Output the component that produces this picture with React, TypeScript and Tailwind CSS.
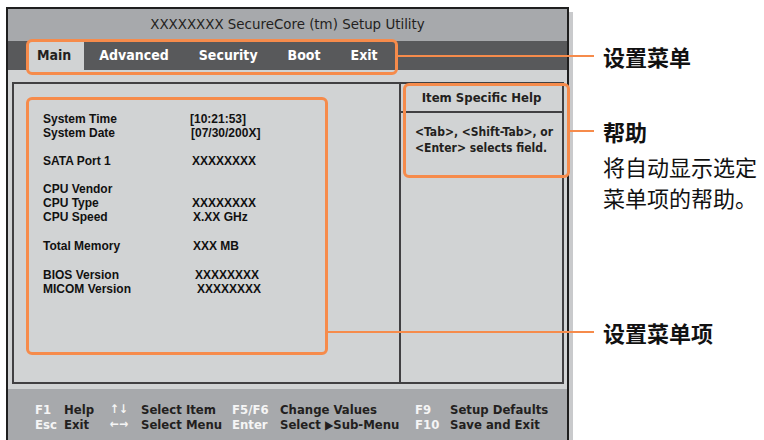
import React from "react";

const bios = "font-['Liberation_Sans_Narrow','DejaVu_Sans_Condensed',sans-serif]";

const items: { label: string; value: string; off: number }[][] = [
  [
    { label: "System Time", value: "[10:21:53]", off: 0 },
    { label: "System Date", value: "[07/30/200X]", off: 1 },
  ],
  [{ label: "SATA Port 1", value: "XXXXXXXX", off: 2 }],
  [
    { label: "CPU Vendor", value: "", off: 0 },
    { label: "CPU Type", value: "XXXXXXXX", off: 2 },
    { label: "CPU Speed", value: "X.XX GHz", off: 3 },
  ],
  [{ label: "Total Memory", value: "XXX MB", off: 3 }],
  [
    { label: "BIOS Version", value: "XXXXXXXX", off: 5 },
    { label: "MICOM Version", value: "XXXXXXXX", off: 7 },
  ],
];

const tabs = ["Advanced", "Security", "Boot", "Exit"];

const App = () => {
  return (
    <div className="relative w-[764px] h-[440px] overflow-hidden bg-white">
      {/* bios window */}
      <div className="ml-[6px] mt-[7px] w-[563px] h-[433px] flex flex-col border-2 border-b-0 border-[#1f1f1f] shadow-[4px_5px_0_#c9cacc] bg-[#d1d3d4]">
        <div className="h-[32px] flex items-center justify-center bg-[#a7a9ac] text-[13.4px] text-[#231f20] font-['DejaVu_Sans',sans-serif]">
          XXXXXXXX SecureCore (tm) Setup Utility
        </div>
        <div className={`h-[30px] flex items-stretch bg-[#58595b] text-[14px] font-bold text-white ${bios}`}>
          <div className="ml-[20px] pl-[9px] pr-[13px] flex items-center bg-[#d1d3d4] text-[#231f20]">Main</div>
          {tabs.map((t) => (
            <div key={t} className="px-[15px] flex items-center">{t}</div>
          ))}
        </div>

        {/* content */}
        <div className="flex-1 flex flex-col">
          <div className="mt-[12px] ml-[4px] mr-[3px] h-[302px] flex border-2 border-[#414042]">
            <div className="w-[387px] pl-[29px] pt-[28px] border-r-2 border-[#414042] font-['Liberation_Sans',Arial,sans-serif] font-bold text-[12px] leading-[14px] text-[#111]">
              {items.map((g, i) => (
                <div key={i} className={i === 2 || i === 3 ? "mb-[15px]" : "mb-[14px]"}>
                  {g.map((r) => (
                    <div key={r.label} className="flex">
                      <span className="w-[147px]">{r.label}</span>
                      <span style={{ paddingLeft: r.off }}>{r.value}</span>
                    </div>
                  ))}
                </div>
              ))}
            </div>
            <div className={`flex-1 flex flex-col text-[#231f20] ${bios}`}>
              <div className="h-[29px] flex items-center justify-center border-b-2 border-[#414042] text-[13px] font-bold">
                Item Specific Help
              </div>
              <div className="pl-[14px] pt-[11px] text-[12px] font-bold leading-[16px]">
                <div>&lt;Tab&gt;, &lt;Shift-Tab&gt;, or</div>
                <div>&lt;Enter&gt; selects field.</div>
              </div>
            </div>
          </div>
          <div className="flex-1" />
        </div>

        {/* footer */}
        <div className={`h-[51px] mt-[5px] bg-[#a7a9ac] pl-[27px] pt-[13px] grid grid-cols-[29px_46px_31px_91px_48px_135px_35px_1fr] grid-rows-[15px_15px] text-[13px] leading-[15px] font-bold text-[#231f20] ${bios}`}>
          <span className="text-[#f5f5f5]">F1</span>
          <span>Help</span>
          <span className="text-[#f5f5f5] text-[12px] leading-[15px]">↑↓</span>
          <span>Select Item</span>
          <span className="text-[#f5f5f5]">F5/F6</span>
          <span>Change Values</span>
          <span className="text-[#f5f5f5]">F9</span>
          <span>Setup Defaults</span>
          <span className="text-[#f5f5f5]">Esc</span>
          <span>Exit</span>
          <span className="text-[#f5f5f5] text-[12px] leading-[15px]">←→</span>
          <span>Select Menu</span>
          <span className="text-[#f5f5f5]">Enter</span>
          <span className="leading-[15px]">Select <span className="text-[12px] leading-[15px]">▶</span>Sub-Menu</span>
          <span className="text-[#f5f5f5]">F10</span>
          <span>Save and Exit</span>
        </div>
      </div>

      {/* callouts */}
      <div className="absolute left-[26px] top-[39px] w-[372px] h-[36px] rounded-[6px] border-[3px] border-[#f68b4b]" />
      <div className="absolute left-[398px] top-[55px] w-[196px] h-[2px] bg-[#f68b4b]" />
      <div className="absolute left-[26px] top-[97px] w-[302px] h-[258px] rounded-[6px] border-[3px] border-[#f68b4b]" />
      <div className="absolute left-[327px] top-[331px] w-[267px] h-[2px] bg-[#f68b4b]" />
      <div className="absolute left-[403px] top-[83px] w-[167px] h-[95px] rounded-[6px] border-[3px] border-[#f68b4b]" />
      <div className="absolute left-[569px] top-[130px] w-[25px] h-[2px] bg-[#f68b4b]" />

      <div className="absolute left-[603px] top-[41px] text-[22px] leading-[30px] font-bold text-[#111] font-['Noto_Sans_CJK_SC',sans-serif]">设置菜单</div>
      <div className="absolute left-[603px] top-[116px] text-[22px] leading-[30px] text-[#111] font-['Noto_Sans_CJK_SC',sans-serif]">
        <div className="font-bold">帮助</div>
        <div className="mt-[5px] leading-[31px]">将自动显示选定</div>
        <div className="leading-[31px]">菜单项的帮助。</div>
      </div>
      <div className="absolute left-[603px] top-[317px] text-[22px] leading-[30px] font-bold text-[#111] font-['Noto_Sans_CJK_SC',sans-serif]">设置菜单项</div>
    </div>
  );
};

export default App;
